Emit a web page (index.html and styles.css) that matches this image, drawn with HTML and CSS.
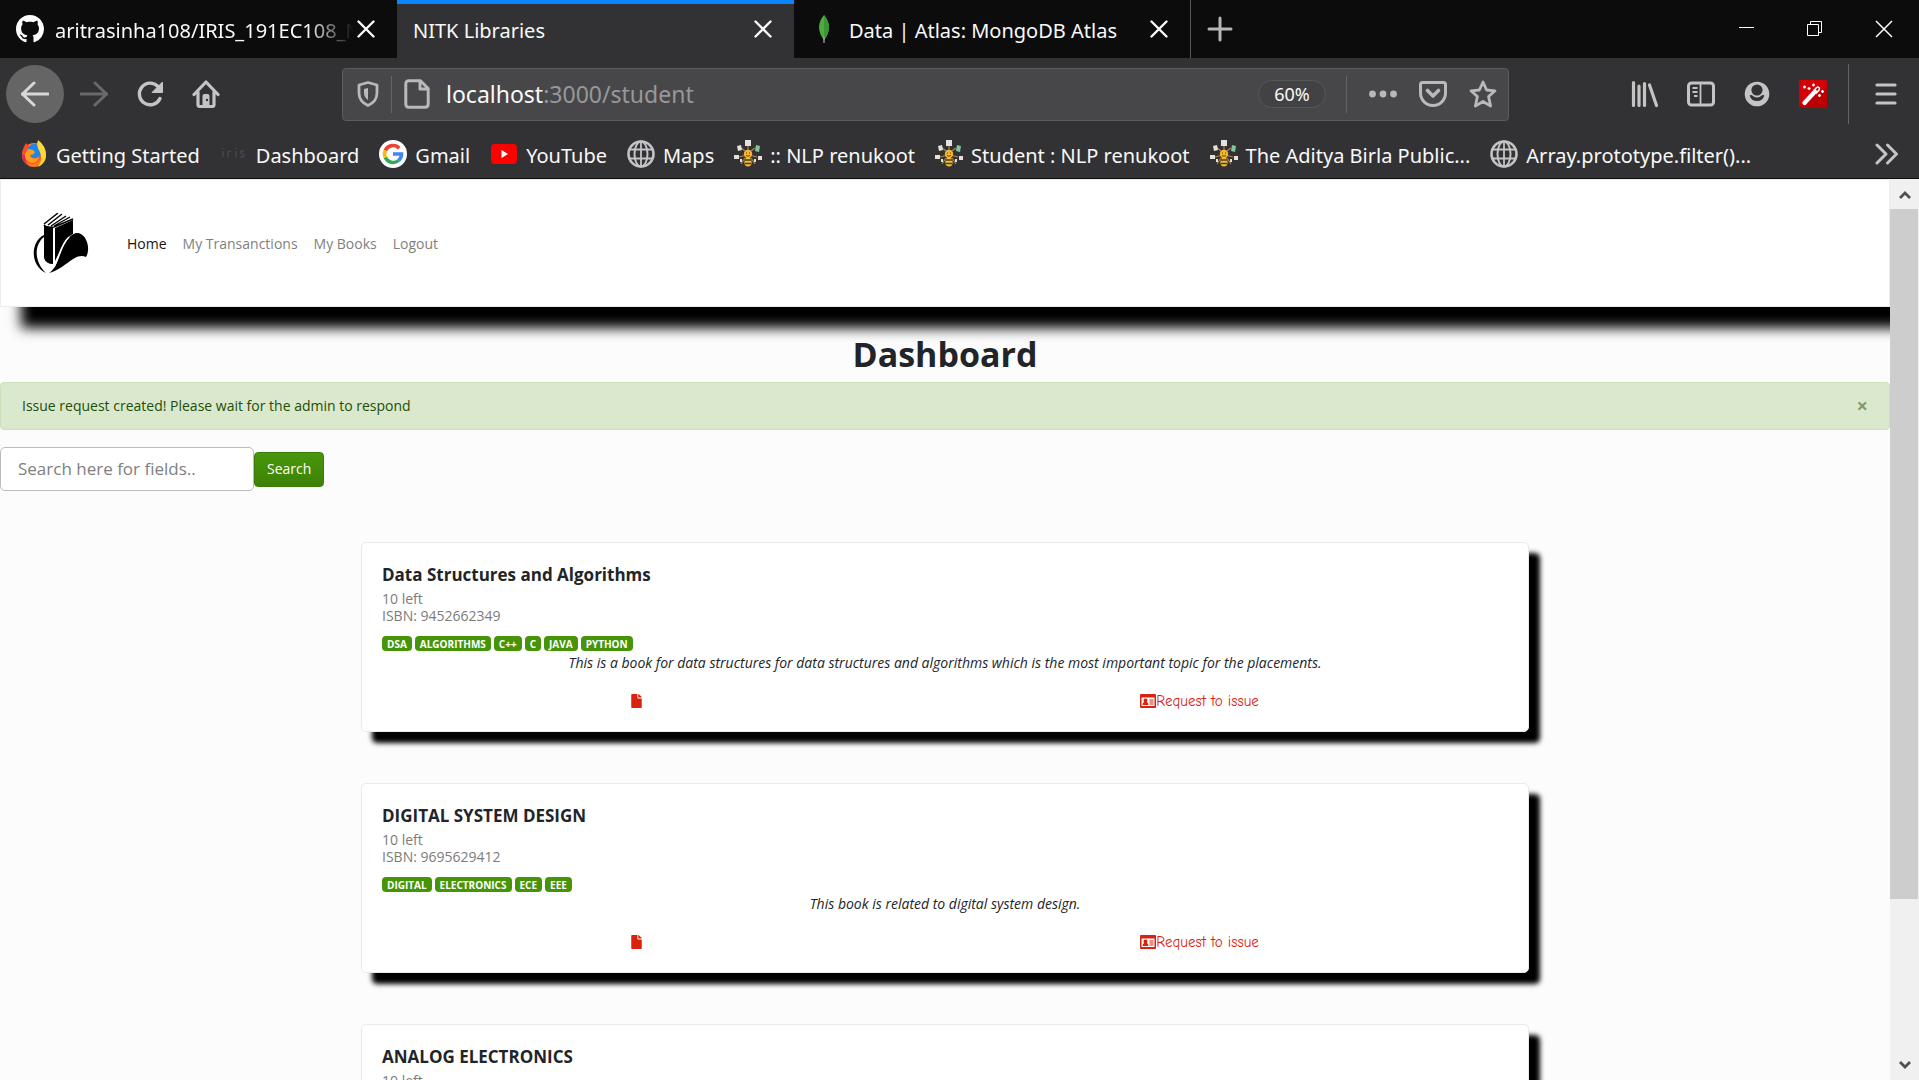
FILE: index.html
```html
<!DOCTYPE html>
<html lang="en">
<head>
<meta charset="utf-8">
<title>NITK Libraries</title>
<link rel="stylesheet" href="styles.css">
</head>
<body>
<svg class="defs" aria-hidden="true">
  <symbol id="i-x" viewBox="0 0 18 18"><path d="M1.500 1.500l15 15M16.500 1.500l-15 15" fill="none" stroke="currentColor" stroke-width="2.400" stroke-linecap="round"/></symbol>
  <symbol id="i-globe" viewBox="0 0 28 28"><g fill="none" stroke="#c4c4c5" stroke-width="2"><circle cx="14" cy="14" r="12.500" stroke-width="2.600"/><ellipse cx="14" cy="14" rx="6.500" ry="12.500"/><path d="M14 2v24M3 9.500h22M3 18.500h22" stroke-width="1.800"/></g></symbol>
  <symbol id="i-bee" viewBox="0 0 28 28">
    <path d="M14 13L7 8M14 13l7-5M13 15l-8 2M15 15l8 2M14 12V6M11 18l-4 6M17 18l4 6" stroke="#a8864f" stroke-width="1.200" fill="none"/>
    <path d="M11 0h6v6h-6zM3 6l4-1 1 5-4 1zM0 15h5v4H0zM24 16h4v4h-4zM6 19h2v3H6zM20 19h2v3h-2z" fill="#e6dfdc"/>
    <path d="M22 5l4 1-1 6-4-1z" fill="#7fc79a"/>
    <circle cx="14" cy="14" r="4.200" fill="#f2b632"/><path d="M12 13h1M15 13h1M12 15.500q2 1.500 4 0" stroke="#6b4310" fill="none"/>
    <ellipse cx="14" cy="22" rx="3.600" ry="4.500" fill="#f5bd2d"/><path d="M10.500 20h7M11 23.500h6" stroke="#4d3a18" stroke-width="1.400"/>
  </symbol>
  <symbol id="i-file" viewBox="0 0 384 512"><path fill="currentColor" d="M224 136V0H24C10.700 0 0 10.700 0 24v464c0 13.300 10.700 24 24 24h336c13.300 0 24-10.700 24-24V160H248c-13.200 0-24-10.800-24-24zm160-14.100v6.100H256V0h6.100c6.400 0 12.500 2.500 17 7l97.900 98c4.500 4.500 7 10.600 7 16.900z"/></symbol>
  <symbol id="i-card" viewBox="0 0 16 14"><path fill="currentColor" fill-rule="evenodd" d="M1 0h14a1 1 0 0 1 1 1v12a1 1 0 0 1-1 1H1a1 1 0 0 1-1-1V1a1 1 0 0 1 1-1zM1.500 3.500v8.500h13V3.500zM5.500 4.500a2 2 0 0 1 1.200 3.600Q8.500 8.800 8.500 11h-6q0-2.200 1.800-2.900A2 2 0 0 1 5.500 4.500zM9.500 5.500h4v1h-4zM9.500 7.500h4v1h-4zM9.500 9.500h4v1h-4z"/></symbol>
</svg>

<header class="browser">
  <div class="tabs">
    <div class="tab">
      <svg class="ico" viewBox="0 0 16 16"><path fill="#fff" d="M8 0C3.580 0 0 3.580 0 8c0 3.540 2.290 6.530 5.470 7.590.4.070.55-.17.55-.38 0-.19-.01-.82-.01-1.490-2.010.37-2.530-.49-2.690-.94-.09-.23-.48-.94-.82-1.130-.28-.15-.68-.52-.01-.53.63-.01 1.080.58 1.230.82.72 1.210 1.870.87 2.330.66.070-.52.28-.87.51-1.070-1.780-.2-3.640-.89-3.640-3.950 0-.87.31-1.590.82-2.150-.08-.2-.36-1.020.08-2.120 0 0 .67-.21 2.200.82.64-.18 1.320-.27 2-.27s1.360.09 2 .27c1.530-1.040 2.200-.82 2.200-.82.44 1.100.16 1.920.08 2.120.51.56.82 1.270.82 2.150 0 3.070-1.870 3.750-3.650 3.950.29.25.54.73.54 1.480 0 1.070-.01 1.930-.01 2.200 0 .21.15.46.55.38A8.010 8.010 0 0 0 16 8c0-4.420-3.580-8-8-8z"/></svg>
      <span class="tab-title fade">aritrasinha108/IRIS_191EC108_N</span>
      <button class="plain" aria-label="Close tab"><svg class="x"><use href="#i-x"/></svg></button>
    </div>
    <div class="tab active">
      <span class="tab-title">NITK Libraries</span>
      <button class="plain" aria-label="Close tab"><svg class="x"><use href="#i-x"/></svg></button>
    </div>
    <div class="tab last">
      <svg class="ico" viewBox="0 0 28 28"><path d="M14 0q10 12 0 25Q4 12 14 0z" fill="#4faa41"/><path d="M14 0q10 12 0 25z" fill="#3f9437"/><path d="M14 22v6" stroke="#b8b09a" stroke-width="1.200"/></svg>
      <span class="tab-title">Data | Atlas: MongoDB Atlas</span>
      <button class="plain" aria-label="Close tab"><svg class="x"><use href="#i-x"/></svg></button>
    </div>
    <button class="plain new-tab" aria-label="New tab"><svg width="26" height="26" viewBox="0 0 26 26"><path d="M13 2v22M2 13h22" stroke="#b6b6b8" stroke-width="3" stroke-linecap="round"/></svg></button>
    <div class="window-controls">
      <button class="plain" aria-label="Minimize"><svg width="16" height="18" viewBox="0 0 16 18"><path d="M0 7.500h15" stroke="#fff"/></svg></button>
      <button class="plain" aria-label="Restore"><svg width="16" height="16" viewBox="0 0 16 16"><path d="M.5 3.500h11v11H.5zM3.500 3.500v-3h11v11h-3" stroke="#fff" fill="none"/></svg></button>
      <button class="plain" aria-label="Close"><svg width="18" height="18" viewBox="0 0 18 18"><path d="M1 1l16 16M17 1L1 17" stroke="#fff" stroke-width="1.500"/></svg></button>
    </div>
  </div>

  <div class="toolbar">
    <div class="nav-buttons">
      <button class="plain back" aria-label="Back"><svg class="ico" viewBox="0 0 28 28"><path d="M27 14H1M13 3L1.500 14 13 25" fill="none" stroke="#d8d8d9" stroke-width="3" stroke-linecap="round" stroke-linejoin="round"/></svg></button>
      <button class="plain" aria-label="Forward"><svg class="ico" viewBox="0 0 28 28"><path d="M1 14h26M15 3l11.500 11L15 25" fill="none" stroke="#69696b" stroke-width="3" stroke-linecap="round" stroke-linejoin="round"/></svg></button>
      <button class="plain" aria-label="Reload"><svg class="ico" viewBox="0 0 28 28"><path d="M24 18.500A10.800 10.800 0 1 1 22 6.500" fill="none" stroke="#c4c4c5" stroke-width="3.400" stroke-linecap="round"/><path d="M26.500 2v10.500H16z" fill="#c4c4c5" stroke="#c4c4c5" stroke-linejoin="round"/></svg></button>
      <button class="plain" aria-label="Home"><svg class="ico" viewBox="0 0 28 28"><path d="M2 14.500L14 2l12 12.500M6 12v12.500q0 2 2 2h12q2 0 2-2V12" fill="none" stroke="#c4c4c5" stroke-width="3.200" stroke-linecap="round" stroke-linejoin="round"/><path d="M10.500 26V16q0-2 2-2h3q2 0 2 2v10z" fill="#c4c4c5"/><circle cx="15" cy="20" r="1.200" fill="#323234"/></svg></button>
    </div>
    <div class="url-bar">
      <svg width="22" height="26" viewBox="0 0 22 26"><path d="M11 1.500l9 2.500v8q0 8.500-9 12.500Q2 20.500 2 12V4z" fill="none" stroke="#b9b9ba" stroke-width="2.800" stroke-linejoin="round"/><path d="M11 7v12Q7 16 7 12V8z" fill="#b9b9ba"/></svg>
      <span class="sep"></span>
      <svg width="26" height="30" viewBox="0 0 26 30"><path d="M5 1.800h11.500l7.700 7.700V25q0 3.200-3.200 3.200H5Q1.800 28.200 1.800 25V5Q1.800 1.800 5 1.800zM16 2v8h8" fill="none" stroke="#b9b9ba" stroke-width="3" stroke-linejoin="round"/></svg>
      <div class="url" role="textbox" contenteditable="true" aria-label="Address" spellcheck="false"><b>localhost</b>:3000/student</div>
      <button class="plain zoom">60%</button>
      <span class="sep"></span>
      <div class="url-actions">
        <button class="plain" aria-label="Page actions"><svg class="ico" viewBox="0 0 28 28" fill="#b9b9ba"><circle cx="3.500" cy="14" r="3.400"/><circle cx="14" cy="14" r="3.400"/><circle cx="24.500" cy="14" r="3.400"/></svg></button>
        <button class="plain" aria-label="Save to Pocket"><svg class="ico" viewBox="0 0 28 28"><path d="M3.500 2.500h21q2 0 2 2V13a12.500 12.500 0 0 1-25 0V4.500q0-2 2-2z" fill="none" stroke="#b9b9ba" stroke-width="3"/><path d="M8.500 10.500l5.500 5.500 5.500-5.500" fill="none" stroke="#b9b9ba" stroke-width="3.600" stroke-linecap="round" stroke-linejoin="round"/></svg></button>
        <button class="plain" aria-label="Bookmark"><svg class="ico" viewBox="0 0 28 28"><path d="M14 2l3.600 8 8.400.8-6.400 5.700 2 9.500L14 21.500 6.400 26l2-9.500L2 10.800l8.400-.8z" fill="none" stroke="#b9b9ba" stroke-width="2.800" stroke-linejoin="round"/></svg></button>
      </div>
    </div>
    <div class="tools">
      <button class="plain" aria-label="Library"><svg class="ico" viewBox="0 0 28 28"><path d="M2.500 2.500v23M8 6v19.500M13.500 3.500v22M18.500 5l7 20.500" stroke="#c4c4c5" stroke-width="3.200" stroke-linecap="round"/></svg></button>
      <button class="plain" aria-label="Sidebars"><svg class="ico" viewBox="0 0 28 28"><rect x="1.500" y="3" width="25" height="22" rx="3" fill="none" stroke="#c4c4c5" stroke-width="3"/><path d="M13.500 3v22M5.500 8h5M5.500 12h5M7 16h3.500" stroke="#c4c4c5" stroke-width="1.800"/></svg></button>
      <button class="plain" aria-label="Account"><svg class="ico" viewBox="0 0 28 28"><circle cx="14" cy="14" r="12.300" fill="#c4c4c5"/><circle cx="14" cy="10" r="5.600" fill="#323234"/><path d="M6.500 15.500q2-1 3.500.5 4 3 8 0 1.500-1.500 3.500-.5-2 5.500-7.500 5.500t-7.500-5.500z" fill="#323234"/></svg></button>
      <button class="plain" aria-label="Magic wand"><svg class="ico" viewBox="0 0 28 28"><rect width="28" height="28" rx="2" fill="#d40006"/><path d="M28 8v18q0 2-2 2H2q-2 0-2-2z" fill="#bb0004"/><path d="M5.500 23L16 11.500" stroke="#fff" stroke-width="4.200" stroke-linecap="round"/><path d="M14.500 11l3-3.500q1.500-1 2.500 0t0 2.500l-3 3.500" stroke="#fff" stroke-width="1.500" fill="none"/><path d="M5.500 5.500v3M4 7h3M10 7v3M8.500 8.500h3M14.500 3.500v3M13 5h3M23.500 10v3M22 11.500h3M20.500 14v3M19 15.500h3" stroke="#fff" stroke-width="1.300"/></svg></button>
      <span class="sep tall"></span>
      <button class="plain" aria-label="Menu"><svg width="22" height="24" viewBox="0 0 22 24"><path d="M2 3h18M2 12h18M2 21h18" stroke="#c4c4c5" stroke-width="3.200" stroke-linecap="round"/></svg></button>
    </div>
  </div>

  <nav class="bookmarks" aria-label="Bookmarks">
    <a href="#"><svg class="ico" viewBox="0 0 28 28"><circle cx="14" cy="15" r="12" fill="#ff7a1c"/><path d="M2.500 11Q4 6 6 3l3 4q5-4 10-4-3 6 2 11 0 9-8 10-9-1-9-9z" fill="#ff4a32"/><circle cx="14.500" cy="11" r="7" fill="#1689f2"/><path d="M8 9q5 0 7 3-1 3-5 3 2 6 9 2-1 6-7 6-8-2-7-9z" fill="#ff9e17"/><path d="M18 0q8 6 8 15 0 8-8 12 6-8 1-17-3-5-1-10z" fill="#ffd83a"/><path d="M2 13q0 10 8 13-5-3-5-10z" fill="#e0206b"/></svg><span>Getting Started</span></a>
    <a href="#"><svg class="ico" viewBox="0 0 28 28"><path d="M3 11v6M8 17v-5q0-1 3-1M16 11v6M24 11q-3-1-3 1t2 2 0 3h-3M3 8v1M16 8v1" fill="none" stroke="#47474a" stroke-width="1.500"/></svg><span>Dashboard</span></a>
    <a href="#"><svg class="ico" viewBox="0 0 28 28"><circle cx="14" cy="14" r="14" fill="#fff"/><g fill="none" stroke-width="3.600"><path d="M20.200 8.200A8.500 8.500 0 0 0 6.300 10.400" stroke="#ea4335"/><path d="M6.300 10.400a8.500 8.500 0 0 0 0 7.200" stroke="#fbbc05"/><path d="M6.300 17.600A8.500 8.500 0 0 0 19.500 20.500" stroke="#34a853"/><path d="M19.500 20.500A8 8 0 0 0 22.500 14H14" stroke="#4285f4"/></g></svg><span>Gmail</span></a>
    <a href="#"><svg class="ico" viewBox="0 0 28 28"><rect x="1" y="4" width="26" height="20" rx="4" fill="#f00"/><path d="M11.500 10v8l6.500-4z" fill="#fff"/></svg><span>YouTube</span></a>
    <a href="#"><svg class="ico"><use href="#i-globe"/></svg><span>Maps</span></a>
    <a href="#"><svg class="ico"><use href="#i-bee"/></svg><span>:: NLP renukoot</span></a>
    <a href="#"><svg class="ico"><use href="#i-bee"/></svg><span>Student : NLP renukoot</span></a>
    <a href="#"><svg class="ico"><use href="#i-bee"/></svg><span>The Aditya Birla Public...</span></a>
    <a href="#"><svg class="ico"><use href="#i-globe"/></svg><span>Array.prototype.filter()...</span></a>
    <button class="plain more" aria-label="More bookmarks"><svg width="24" height="22" viewBox="0 0 24 22"><path d="M2 2l9 9-9 9M12.500 2l9 9-9 9" fill="none" stroke="#c4c4c5" stroke-width="3" stroke-linecap="round" stroke-linejoin="round"/></svg></button>
  </nav>
</header>

<div class="viewport">
  <div class="page">
    <nav class="navbar">
      <a class="logo" href="#" aria-label="NITK Libraries"><svg width="56" height="60" viewBox="0 0 56 60">
        <path d="M11 11L25 0M15 12L29 1M18 13L33 3M21 13L37 4M11 12q2 3 10 2L40 6" fill="none" stroke="#000" stroke-width="1.400"/>
        <path d="M11 12q3 3 9 3v36q-7 0-9-6z"/>
        <path d="M22 15l18-8v14q-6 3-9 9L22 48z"/>
        <path d="M11 22C-2 28-4 52 13 60 2 50 0 33 11 24z"/>
        <path d="M16 60C27 54 28 24 43 20c7-1 13 8 12 17q0 4-2 7C41 39 33 56 16 60z"/>
        <path d="M36 24C27 32 26 46 21 54" fill="none" stroke="#fff" stroke-width="1.500"/>
      </svg></a>
      <a class="current" href="#">Home</a>
      <a href="#">My Transanctions</a>
      <a href="#">My Books</a>
      <a href="#">Logout</a>
    </nav>
    <main>
      <h1>Dashboard</h1>
      <div class="alert" role="alert"><span>Issue request created! Please wait for the admin to respond</span><button class="plain dismiss" aria-label="Close">×</button></div>
      <form class="search">
        <input type="text" placeholder="Search here for fields.." aria-label="Search here for fields">
        <button type="button">Search</button>
      </form>
      <div class="cards">
        <article class="card">
          <h2>Data Structures and Algorithms</h2>
          <p class="meta">10 left<br>ISBN: 9452662349</p>
          <div class="badges"><span>DSA</span><span>ALGORITHMS</span><span>C++</span><span>C</span><span>JAVA</span><span>PYTHON</span></div>
          <p class="desc">This is a book for data structures for data structures and algorithms which is the most important topic for the placements.</p>
          <div class="links"><a href="#" aria-label="Details"><svg width="11" height="14"><use href="#i-file"/></svg></a><a class="request" href="#"><svg width="16" height="14"><use href="#i-card"/></svg>Request to issue</a></div>
        </article>
        <article class="card">
          <h2>DIGITAL SYSTEM DESIGN</h2>
          <p class="meta">10 left<br>ISBN: 9695629412</p>
          <div class="badges"><span>DIGITAL</span><span>ELECTRONICS</span><span>ECE</span><span>EEE</span></div>
          <p class="desc">This book is related to digital system design.</p>
          <div class="links"><a href="#" aria-label="Details"><svg width="11" height="14"><use href="#i-file"/></svg></a><a class="request" href="#"><svg width="16" height="14"><use href="#i-card"/></svg>Request to issue</a></div>
        </article>
        <article class="card">
          <h2>ANALOG ELECTRONICS</h2>
          <p class="meta">10 left</p>
        </article>
      </div>
    </main>
  </div>
  <div class="scrollbar" aria-hidden="true">
    <svg width="12" height="10" viewBox="0 0 12 10"><path d="M1 8l5-5 5 5" fill="none" stroke="#505050" stroke-width="2.800"/></svg>
    <div class="track"><div class="thumb"></div></div>
    <svg width="12" height="10" viewBox="0 0 12 10"><path d="M1 2l5 5 5-5" fill="none" stroke="#505050" stroke-width="2.800"/></svg>
  </div>
</div>
</body>
</html>
```
FILE: styles.css
```css
* { box-sizing: border-box; }
html, body { height: 100%; }
body {
  margin: 0;
  display: flex;
  flex-direction: column;
  overflow: hidden;
  font-family: "Open Sans", "Noto Sans", sans-serif;
  font-size: 14px;
  line-height: 21px;
  color: #212529;
  background: #fcfcfc;
}
h1, h2, p { margin: 0; }
a { color: inherit; text-decoration: none; }
svg { display: block; flex: none; }
.defs { display: none; }
.ico { width: 28px; height: 28px; }
.x { width: 18px; height: 18px; }
.plain {
  display: flex;
  align-items: center;
  justify-content: center;
  padding: 0;
  border: 0;
  background: none;
  color: inherit;
  font: inherit;
}

/* Browser frame */
.browser {
  flex: none;
  background: #323234;
  border-bottom: 1px solid #0c0c0d;
  color: #f9f9fa;
  font-family: "Noto Sans", "Open Sans", sans-serif;
  font-size: 20px;
  line-height: 28px;
}
.tabs { display: flex; height: 58px; background: #0c0c0d; }
.tab {
  display: flex;
  align-items: center;
  gap: 11px;
  flex: 0 1 397px;
  min-width: 0;
  padding: 0 22px 0 16px;
}
.tab.active { background: #323234; box-shadow: inset 0 4px #0a84ff; }
.tab.last { border-right: 1px solid #58585a; }
.tab-title { flex: 1; min-width: 0; padding-top: 3px; overflow: hidden; white-space: nowrap; }
.tab-title.fade { margin-right: -8px; mask-image: linear-gradient(to left, transparent, #000 48px); }
.new-tab { width: 58px; }
.window-controls { display: flex; gap: 52px; margin-left: auto; padding-right: 26px; }

.toolbar { display: flex; align-items: center; height: 72px; padding: 0 22px 0 6px; }
.nav-buttons { display: flex; align-items: center; gap: 28px; }
.back { width: 58px; height: 58px; margin-right: -12px; border-radius: 50%; background: #656566; }
.url-bar {
  flex: 1;
  display: flex;
  align-items: center;
  height: 53px;
  margin: 0 122px;
  padding: 0 11px 0 14px;
  gap: 12px;
  background: #474749;
  border: 1px solid #5c5c5e;
  border-radius: 4px;
}
.sep { width: 1px; height: 37px; background: #646468; }
.sep.tall { height: 60px; }
.url { flex: 1; padding-left: 4px; font-size: 23px; line-height: 30px; color: #98989a; white-space: nowrap; outline: 0; }
.url b { font-weight: 400; color: #f9f9fa; }
.zoom {
  width: 68px;
  height: 28px;
  margin-right: 8px;
  border: 1px solid #57575a;
  border-radius: 14px;
  background: #424244;
  font-size: 18px;
}
.url-actions { display: flex; gap: 22px; margin-left: 10px; }
.tools { display: flex; align-items: center; gap: 28px; }
.tools .sep { margin: 0 -2px 0 -7px; }

.bookmarks { display: flex; align-items: center; gap: 20px; height: 48px; padding: 0 20px; white-space: nowrap; }
.bookmarks a { display: flex; align-items: center; gap: 8px; }
.bookmarks span { padding-top: 3px; }
.more { margin-left: auto; }

/* Page area */
.viewport { flex: 1; display: flex; min-height: 0; }
.page { flex: 1; min-width: 0; overflow: hidden; }
.navbar {
  display: flex;
  align-items: center;
  gap: 16px;
  height: 128px;
  padding: 0 32px;
  color: #7f7f7f;
  background: #fff;
  border: 1px solid #ededed;
  box-shadow: 21px 21px 12px #000;
}
.logo { margin-right: 22px; color: #000; }
.current { color: #141414; }
h1 { margin-top: 27px; font-size: 34px; line-height: 40px; text-align: center; }
.alert {
  display: flex;
  align-items: center;
  justify-content: space-between;
  height: 48px;
  margin-top: 8px;
  padding: 0 21px 2px;
  color: #244d04;
  background: #dae9ce;
  border: 1px solid #cbe1ba;
  border-radius: 4px;
}
.dismiss { font-size: 20px; font-weight: 700; color: #7f9b69; }
.search { display: flex; align-items: center; margin-top: 17px; }
.search input {
  width: 254px;
  height: 44px;
  padding: 0 17px 2px;
  border: 1px solid #bbb;
  border-radius: 5px;
  background: #fff;
  font: 17px/24px "Open Sans", sans-serif;
}
.search input::placeholder { color: #808080; opacity: 1; }
.search button {
  height: 35px;
  padding: 0 12px 1px;
  border: 1px solid #3b7d07;
  border-radius: 4px;
  background: linear-gradient(#48980a, #3d8107);
  color: #fff;
  font: 14px/20px "Open Sans", sans-serif;
}
.cards { display: grid; gap: 51px; max-width: 1168px; margin: 51px auto 0; }
.card {
  min-height: 190px;
  padding: 20px;
  background: #fff;
  border: 1px solid #eaeaea;
  border-radius: 5px;
  box-shadow: 11px 11px 5px #000;
}
.card h2 { font-size: 17px; line-height: 24px; }
.meta { margin-top: 3px; line-height: 17px; color: #7c7c7c; }
.badges { display: flex; align-items: center; gap: 3px; height: 17px; margin-top: 11px; }
.badges span {
  height: 15px;
  padding: 0 5px;
  border-radius: 4px;
  background: #469408;
  color: #fff;
  font-size: 10px;
  font-weight: 700;
  line-height: 16px;
}
.desc { font-style: italic; text-align: center; }
.links { display: flex; align-items: center; justify-content: space-around; height: 20px; margin-top: 18px; color: #d9230f; }
.request { display: flex; align-items: center; font-family: "Comic Neue", "Open Sans", sans-serif; font-size: 15px; }

.scrollbar { display: flex; flex-direction: column; align-items: center; width: 29px; padding: 11px 0 10px; background: #f0f0f0; }
.track { flex: 1; align-self: stretch; margin: 9px 0; }
.thumb { width: 28px; height: 82%; background: #cdcdcd; }
```
